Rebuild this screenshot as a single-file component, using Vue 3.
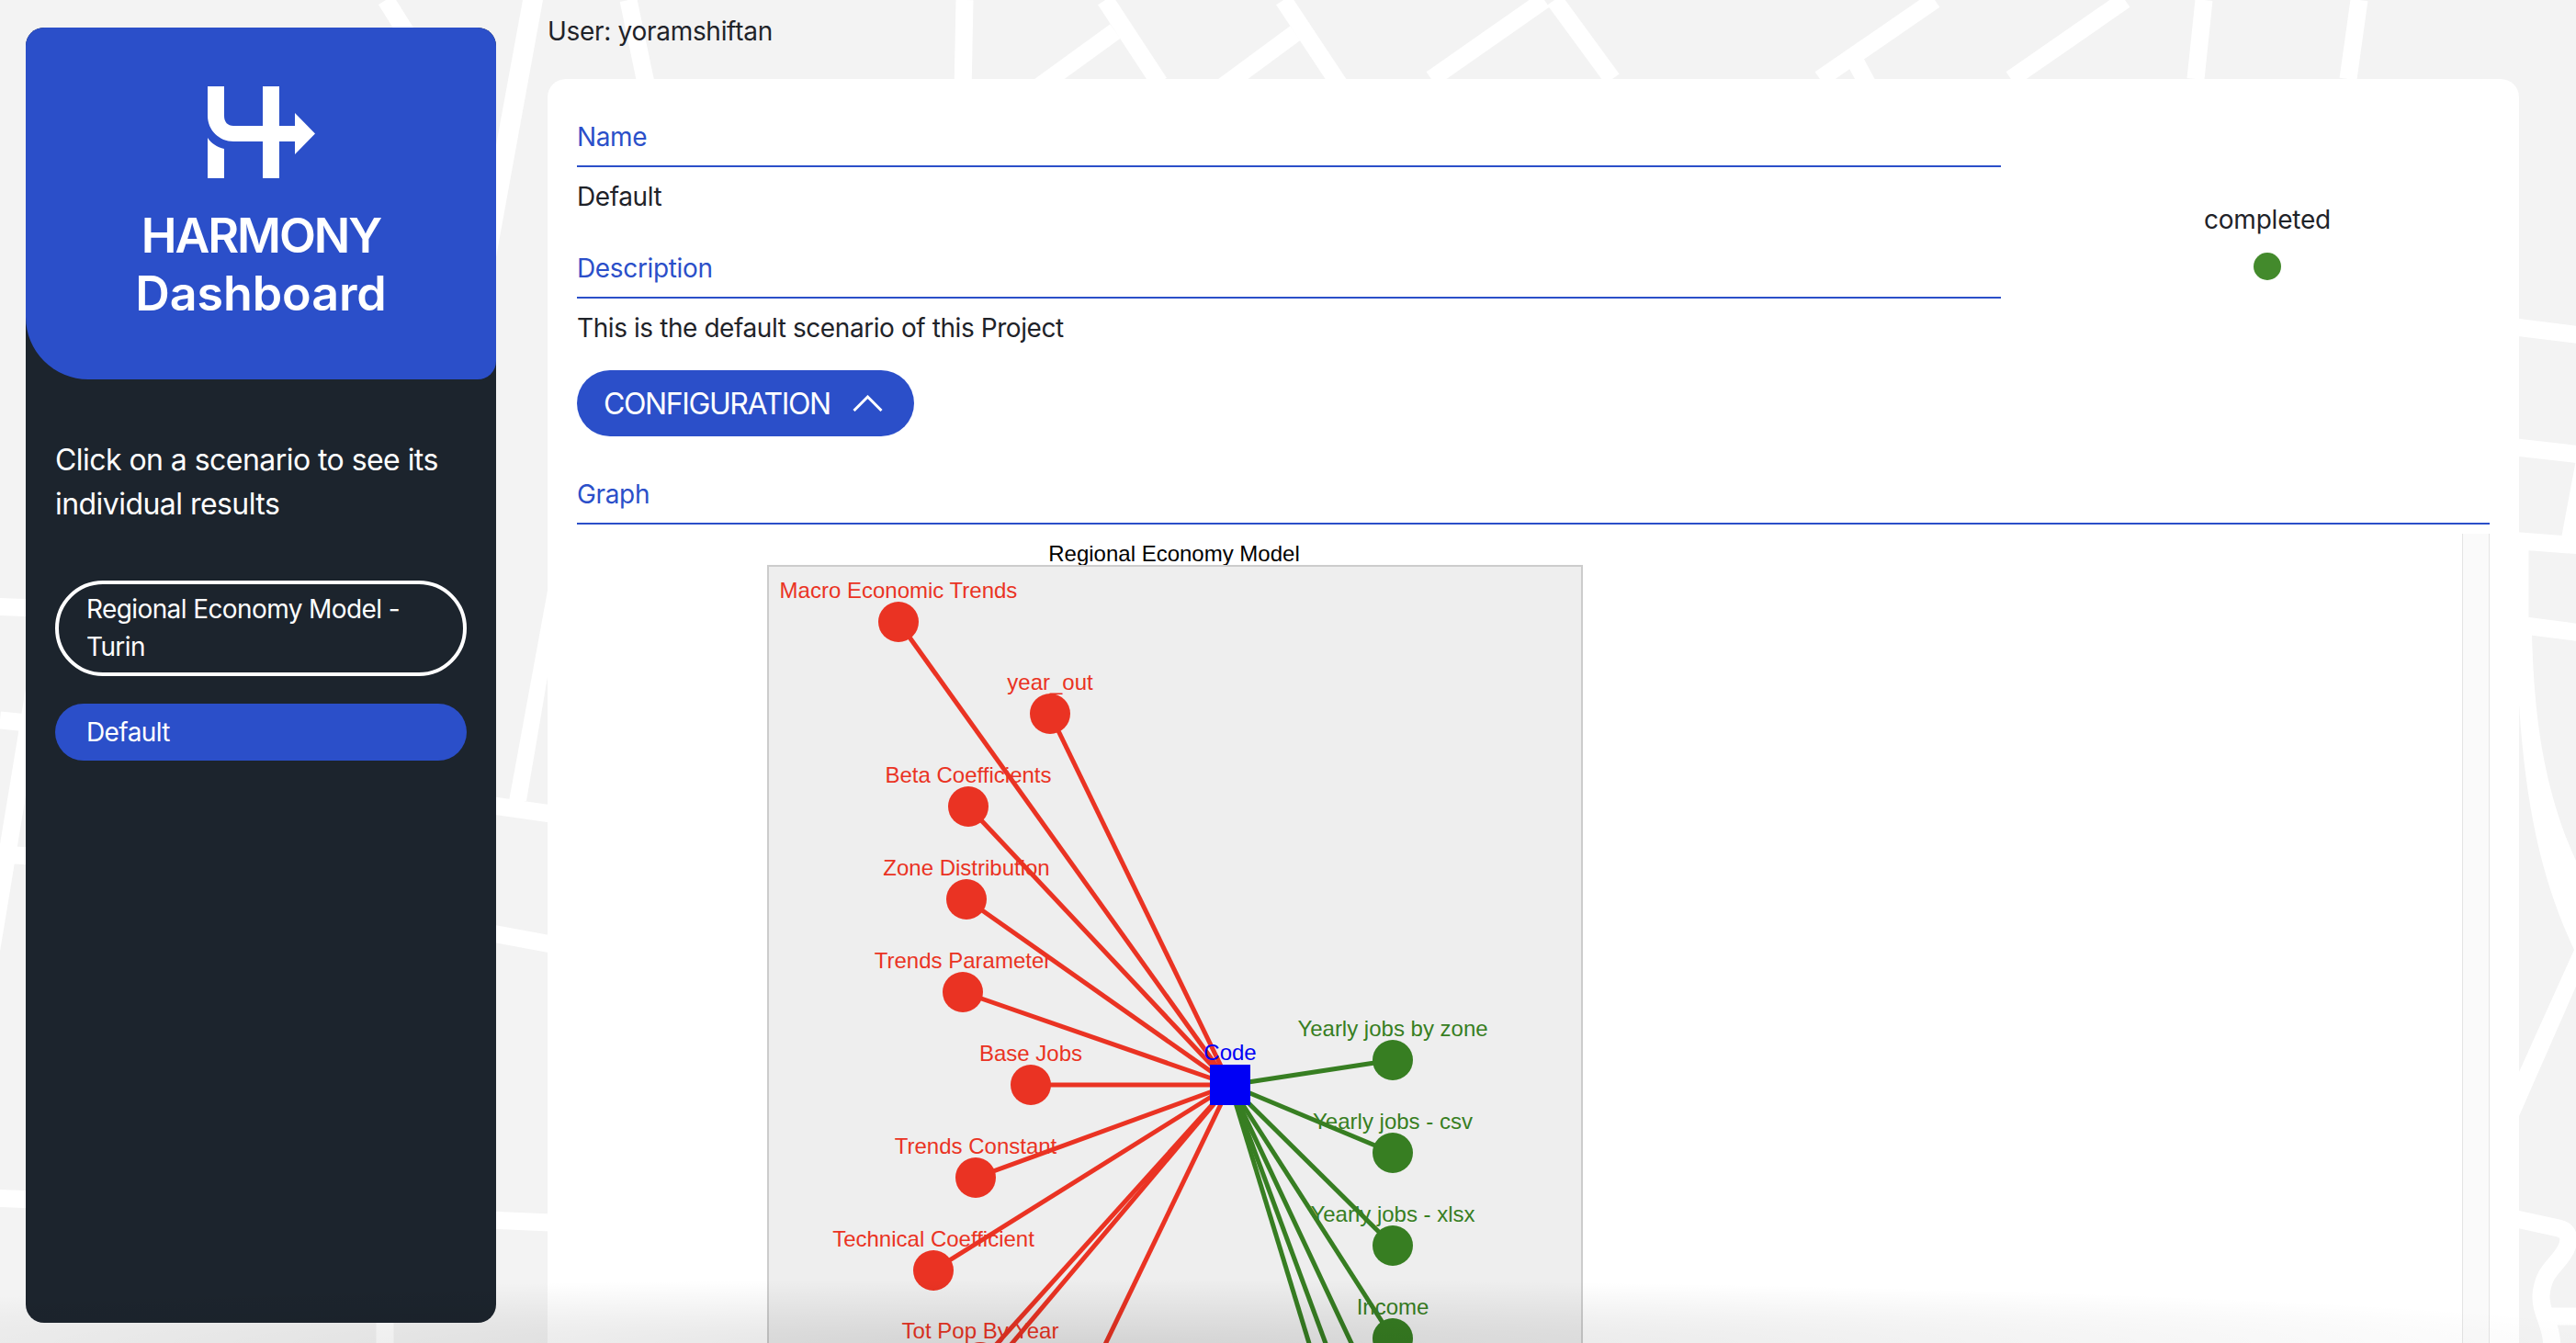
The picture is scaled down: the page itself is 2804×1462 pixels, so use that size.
<template>
  <div class="page">
    <svg class="roads" viewBox="0 0 2804 1462" aria-hidden="true">
      <path v-for="(d, i) in roads" :key="i" :d="d" class="road" />
      <path v-for="(d, i) in roadShapes" :key="'s' + i" :d="d" class="road-shape" />
    </svg>

    <aside class="sidebar">
      <header class="brand">
        <svg class="logo" viewBox="225 94 117 100" width="117" height="100">
          <path d="M225 94H243V126C243 133 247 137 253 137H285V94H303V137H320V123L342 145.5L320 168V154H303V194H285V154H253C238 154 225 142 225 126Z" />
          <path d="M225 150C229 156 235 160 243 162V194H225Z" />
        </svg>
        <h1><span class="h-top">HARMONY</span><span class="h-sub">Dashboard</span></h1>
      </header>
      <div class="side-body">
        <p class="hint">Click on a scenario to see its individual results</p>
        <button class="scenario outlined">Regional Economy Model - Turin</button>
        <button class="scenario active">Default</button>
      </div>
    </aside>

    <main class="main">
      <div class="user">User: yoramshiftan</div>
      <section class="card">
        <div class="top-row">
          <div class="fields">
            <div class="label">Name</div>
            <div class="value">Default</div>
            <div class="label desc">Description</div>
            <div class="value">This is the default scenario of this Project</div>
          </div>
          <div class="status">
            <span>completed</span>
            <i class="dot"></i>
          </div>
        </div>
        <button class="config">
          CONFIGURATION
          <svg width="33" height="18" viewBox="0 0 33 18"><path d="M1.5 17L16.5 2L31.5 17" /></svg>
        </button>
        <div class="label graph-label">Graph</div>
        <div class="graph-frame">
          <svg class="plot" viewBox="628 580 2052 882" width="2052" height="882">
            <text x="1278" y="610" class="title">Regional Economy Model</text>
            <rect x="836" y="615" width="886" height="900" class="plot-bg" />
            <line v-for="n in inputs" :key="n.name + 'e'" :x1="n.x" :y1="n.y" :x2="hub.x" :y2="hub.y" class="edge red" />
            <line v-for="n in outputs" :key="n.name + 'e'" :x1="n.x" :y1="n.y" :x2="hub.x" :y2="hub.y" class="edge green" />
            <line v-for="(e, i) in offInputs" :key="'r' + i" :x1="e[0]" :y1="e[1]" :x2="hub.x" :y2="hub.y" class="edge red" />
            <line v-for="(e, i) in offOutputs" :key="'g' + i" :x1="e[0]" :y1="e[1]" :x2="hub.x" :y2="hub.y" class="edge green" />
            <g v-for="n in inputs" :key="n.name">
              <circle :cx="n.x" :cy="n.y" r="22" fill="#ea3323" />
              <text :x="n.x" :y="n.y - 26" fill="#ea3323">{{ n.name }}</text>
            </g>
            <g v-for="n in outputs" :key="n.name">
              <circle :cx="n.x" :cy="n.y" r="22" fill="#377e22" />
              <text :x="n.x" :y="n.y - 26" fill="#377e22">{{ n.name }}</text>
            </g>
            <rect :x="hub.x - 22" :y="hub.y - 22" width="44" height="44" fill="#0000f5" />
            <text :x="hub.x" :y="hub.y - 27" fill="#0000f5">Code</text>
          </svg>
          <div class="scrollbar"></div>
        </div>
      </section>
    </main>

    <div class="bottom-shade"></div>
  </div>
</template>

<script setup>
const hub = { x: 1339, y: 1180 };

const inputs = [
  { name: "Macro Economic Trends", x: 978, y: 676 },
  { name: "year_out", x: 1143, y: 776 },
  { name: "Beta Coefficients", x: 1054, y: 877 },
  { name: "Zone Distribution", x: 1052, y: 978 },
  { name: "Trends Parameter", x: 1048, y: 1079 },
  { name: "Base Jobs", x: 1122, y: 1180 },
  { name: "Trends Constant", x: 1062, y: 1281 },
  { name: "Technical Coefficient", x: 1016, y: 1382 },
  { name: "Tot Pop By Year", x: 1067, y: 1482 },
];

const outputs = [
  { name: "Yearly jobs by zone", x: 1516, y: 1153 },
  { name: "Yearly jobs - csv", x: 1516, y: 1254 },
  { name: "Yearly jobs - xlsx", x: 1516, y: 1355 },
  { name: "Income", x: 1516, y: 1456 },
];

// nodes further down the page, only their edges reach the viewport
const offInputs = [
  [999, 1583],
  [1145, 1583],
];
const offOutputs = [
  [1449, 1540],
  [1472, 1540],
  [1508, 1540],
];

const roads = [
  "M-10 660L40 662",
  "M0 784L40 788",
  "M40 735L-10 1038",
  "M15 931L40 932",
  "M-10 1304L40 1306",
  "M419 1430V1470",
  "M420 0L445 40",
  "M530 876L600 886",
  "M530 1015L600 1028",
  "M530 1328L600 1331",
  "M684 0L705 100",
  "M1050 0L1048 100",
  "M1203 0L1262 90",
  "M1214 34L1130 95",
  "M1397 0L1460 95",
  "M1410 36L1330 95",
  "M1681 0L1558 86",
  "M1692 0L1755 86",
  "M2106 0L1981 86",
  "M2016 60L2033 92",
  "M2313 0L2189 86",
  "M2399 0L2390 86",
  "M2568 0L2556 86",
  "M2730 355L2810 365",
  "M2825 440L2795 600",
  "M2730 486L2810 495",
  "M2730 588L2810 594",
  "M2743 590V700",
  "M2740 680L2810 689",
  "M2730 1325L2785 1337C2800 1340 2797 1355 2790 1365C2780 1380 2768 1385 2766 1410C2765 1430 2778 1440 2778 1470",
  "M2775 1433H2810",
];

const roadShapes = [
  "M569 0H591L540 280V158Z",
  "M596 643V737L573 872H554Z",
  "M2730 680L2756 691C2758 760 2764 850 2804 937H2810V1060L2742 1215H2730V1167H2742L2802 1034C2770 965 2750 890 2742 767H2730Z",
];
</script>

<style>
html,
body {
  margin: 0;
  overflow: hidden;
  background: #f3f3f3;
}
</style>

<style scoped>
.page {
  position: relative;
  display: flex;
  height: 100vh;
  overflow: hidden;
  font-family: Inter, "Liberation Sans", sans-serif;
  color: #1f2329;
}
.roads {
  position: absolute;
  inset: 0;
  width: 100%;
  height: 100%;
}
.road {
  fill: none;
  stroke: #fff;
  stroke-width: 19;
}
.road-shape {
  fill: #fff;
}
.sidebar {
  position: relative;
  flex: none;
  width: 512px;
  height: 1410px;
  margin: 30px 0 0 28px;
  background: #1c242d;
  border-radius: 20px;
}
.brand {
  display: flex;
  flex-direction: column;
  align-items: center;
  height: 383px;
  padding-top: 64px;
  box-sizing: border-box;
  background: #2b4fc9;
  border-radius: 20px 20px 20px 68px;
}
.logo path {
  fill: #fff;
}
.brand h1 {
  margin: 31px 0 0;
  font-size: 52px;
  line-height: 63px;
  font-weight: 600;
  text-align: center;
  color: #fff;
}
.h-top,
.h-sub {
  display: block;
}
.h-top {
  letter-spacing: -2.1px;
}
.h-sub {
  letter-spacing: -0.1px;
}
.side-body {
  padding: 0 32px;
}
.hint {
  margin: 64px 0 0;
  font-size: 32px;
  line-height: 48px;
  letter-spacing: -0.55px;
  color: #fff;
}
.scenario {
  display: block;
  width: 100%;
  box-sizing: border-box;
  margin: 0;
  padding: 10px 34px;
  border-radius: 52px;
  font: inherit;
  font-size: 28px;
  line-height: 41px;
  letter-spacing: -0.6px;
  text-align: left;
  color: #fff;
}
.outlined {
  margin-top: 59px;
  height: 104px;
  padding: 7px 30px;
  background: none;
  border: 4px solid #fff;
}
.active {
  margin-top: 30px;
  height: 62px;
  background: #2b4fc9;
  border: none;
}
.main {
  position: relative;
  flex: none;
  width: 2146px;
  margin-left: 56px;
}
.user {
  height: 86px;
  padding-top: 13px;
  box-sizing: border-box;
  font-size: 28px;
  line-height: 42px;
  letter-spacing: -0.3px;
}
.card {
  height: 1500px;
  padding: 42px 32px 0;
  box-sizing: border-box;
  background: #fff;
  border-radius: 20px;
}
.top-row {
  display: flex;
}
.fields {
  flex: none;
  width: 1550px;
}
.label {
  padding-bottom: 10px;
  border-bottom: 2px solid #2b4fc9;
  font-size: 28px;
  line-height: 42px;
  letter-spacing: -0.35px;
  color: #2b4fc9;
}
.value {
  margin-top: 11px;
  font-size: 28px;
  line-height: 42px;
  letter-spacing: -0.42px;
}
.desc {
  margin-top: 36px;
}
.status {
  flex: 1;
  display: flex;
  flex-direction: column;
  align-items: center;
  gap: 15px;
  padding: 90px 0 0 48px;
  font-size: 28px;
  line-height: 42px;
  letter-spacing: -0.2px;
}
.dot {
  width: 30px;
  height: 30px;
  border-radius: 50%;
  background: #438a2c;
}
.config {
  display: flex;
  align-items: center;
  gap: 24px;
  height: 72px;
  margin-top: 25px;
  padding: 0 34px 0 29px;
  border: none;
  border-radius: 36px;
  background: #2b4fc9;
  font: inherit;
  font-size: 32px;
  letter-spacing: -1.4px;
  color: #fff;
}
.config svg {
  flex: none;
}
.config path {
  fill: none;
  stroke: #fff;
  stroke-width: 3;
}
.graph-label {
  margin-top: 42px;
}
.graph-frame {
  display: flex;
  margin-top: 10px;
  height: 900px;
}
.plot {
  flex: none;
}
.plot text {
  font-family: "Liberation Sans", Arial, sans-serif;
  font-size: 24px;
  text-anchor: middle;
}
.plot .title {
  fill: #000;
}
.plot-bg {
  fill: #eee;
  stroke: #ccc;
  stroke-width: 2;
}
.edge {
  stroke-width: 5;
}
.edge.red {
  stroke: #ea3323;
}
.edge.green {
  stroke: #377e22;
}
.scrollbar {
  flex: none;
  width: 28px;
  background: #fafafa;
  border-left: 1px solid #e4e4e4;
  border-right: 1px solid #e4e4e4;
}
.bottom-shade {
  position: absolute;
  left: 0;
  right: 0;
  bottom: 0;
  height: 70px;
  background: radial-gradient(ellipse 62% 100% at 42% 100%, rgba(0, 0, 0, 0.11), transparent);
  pointer-events: none;
}
</style>
